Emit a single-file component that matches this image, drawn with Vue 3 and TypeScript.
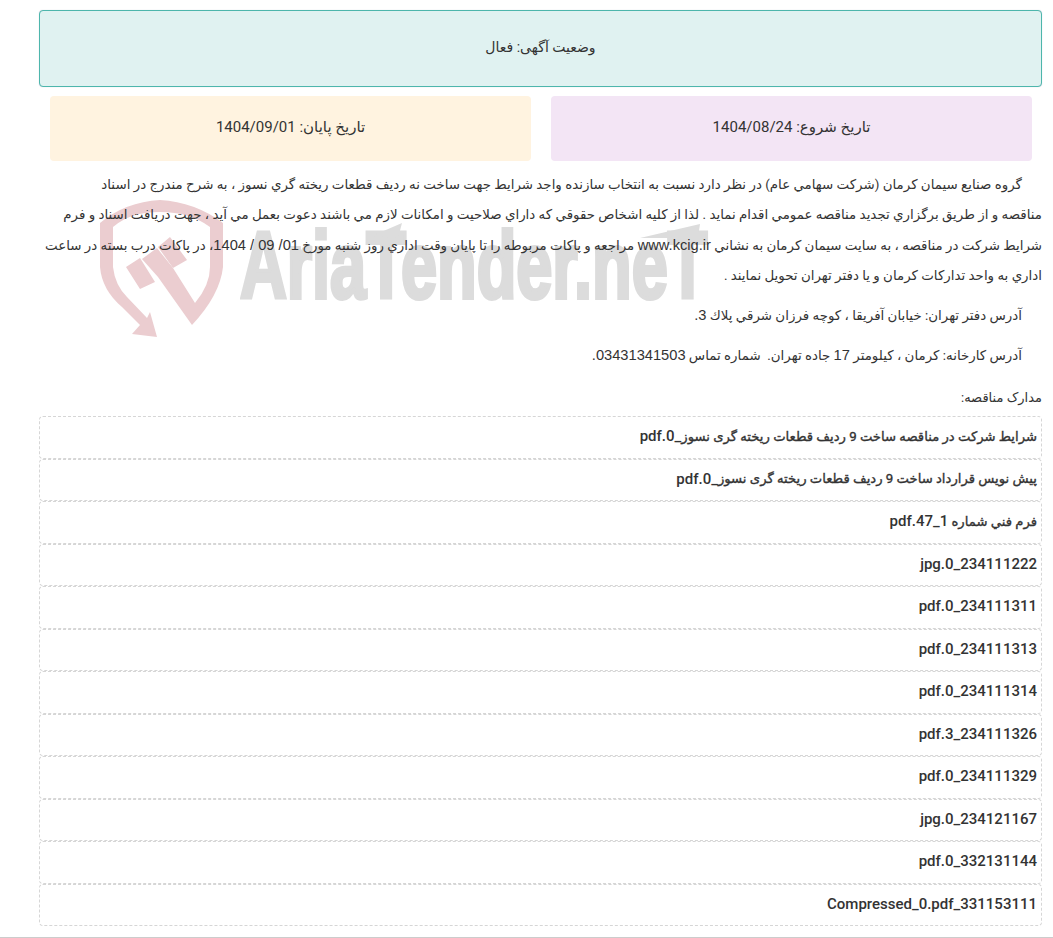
<template>
  <div class="page" dir="rtl">
    <div class="status"><span class="status__text">وضعیت آگهی: فعال</span></div>
    <div class="dates">
      <div class="date date--start"><span class="date__text">تاریخ شروع: 1404/08/24</span></div>
      <div class="date date--end"><span class="date__text">تاریخ پایان: 1404/09/01</span></div>
    </div>

    <div class="body">
      <svg class="mark" viewBox="0 0 160 150" aria-hidden="true">
        <path d="M10 33 Q35 12 70 10 Q105 12 133 33 L133 77 Q130 105 102 135 L68 87 L52 69 L67 58 L83 78 L105 113 Q120 95 120 77 L120 37 Q100 22 70 22 Q40 22 23 37 L23 77 Q25 95 37 107 L57 128 L60 122 L67 147 L42 144 L50 135 L32 117 Q12 100 10 77 Z" />
        <path d="M36 77 L50 68 L65 92 L50 99 Z M68 57 L80 47 L97 70 L83 78 Z" />
      </svg>
      <div class="wordmark" dir="ltr">AriaTender.neT</div>
      <svg class="wordmark-bars" viewBox="0 0 460 30" aria-hidden="true">
        <path d="M132 14 L162 1 L158 16 Z M400 16 L460 2 L458 16 Z" />
      </svg>

      <p class="lead">گروه صنايع سيمان كرمان (شركت سهامي عام) در نظر دارد نسبت به انتخاب سازنده واجد شرايط جهت ساخت نه رديف قطعات ريخته گري نسوز ، به شرح مندرج در اسناد<br />مناقصه و از طريق برگزاري تجديد مناقصه عمومي اقدام نمايد . لذا از كليه اشخاص حقوقي كه داراي صلاحيت و امكانات لازم مي باشند دعوت بعمل مي آيد ، جهت دريافت اسناد و فرم<br />شرايط شركت در مناقصه ، به سايت سيمان كرمان به نشاني <span class="latin">www.kcig.ir</span> مراجعه و پاكات مربوطه را تا پايان وقت اداري روز شنبه مورخ <span class="latin">01/ 09 / 1404</span>، در پاكات درب بسته در ساعت<br />اداري به واحد تداركات كرمان و يا دفتر تهران تحويل نمايند .</p>
      <p class="address">آدرس دفتر تهران: خيابان آفريقا ، كوچه فرزان شرقي پلاك <span class="latin">3.</span></p>
      <p class="address">آدرس كارخانه: كرمان ، كيلومتر <span class="latin">17</span> جاده تهران.&nbsp; شماره تماس <span class="latin">03431341503.</span></p>
    </div>

    <div class="docs-title">مدارک مناقصه:</div>
    <div class="docs">
      <div v-for="file in files" :key="file.name" class="doc"><span class="doc__fa">{{ file.fa }}</span>{{ file.name }}</div>
    </div>
  </div>
</template>

<script setup lang="ts">
interface DocFile {
  fa?: string;
  name: string;
}

const files: DocFile[] = [
  { fa: "شرايط شرکت در مناقصه ساخت 9 رديف قطعات ريخته گری نسوز", name: "_0.pdf" },
  { fa: "پیش نویس قرارداد ساخت 9 رديف قطعات ريخته گری نسوز", name: "_0.pdf " },
  { fa: "فرم فني شماره ", name: "1_47.pdf" },
  { name: "234111222_0.jpg" },
  { name: "234111311_0.pdf" },
  { name: "234111313_0.pdf" },
  { name: "234111314_0.pdf" },
  { name: "234111326_3.pdf" },
  { name: "234111329_0.pdf" },
  { name: "234121167_0.jpg" },
  { name: "332131144_0.pdf" },
  { name: "331153111_Compressed_0.pdf" },
];
</script>

<style>
html,
body {
  margin: 0;
  background: #fff;
}
</style>

<style scoped>
.page {
  box-sizing: border-box;
  height: 938px;
  padding: 10px 11px 0 39px;
  overflow: hidden;
  border-bottom: 1px solid #ccc;
  font-family: Roboto, "DejaVu Sans", sans-serif;
  font-size: 14px;
  color: #333;
}
.status {
  box-sizing: border-box;
  height: 77px;
  display: flex;
  align-items: center;
  justify-content: center;
  background: #e0f2f1;
  border: 1px solid #4db6ac;
  border-radius: 4px;
  box-shadow: 0 0 1px rgba(60, 70, 130, 0.3);
}
.status__text {
  margin-bottom: 4px;
}
.dates {
  display: grid;
  grid-template-columns: 1fr 1fr;
  gap: 20px;
  margin: 9px 10px 0 11px;
}
.date {
  height: 65px;
  display: flex;
  align-items: center;
  justify-content: center;
  border-radius: 4px;
  font-size: 15px;
}
.date__text {
  margin-bottom: 4px;
}
.date--start {
  background: #f3e5f5;
}
.date--end {
  background: #fff3e0;
}
.body {
  position: relative;
  padding-top: 9px;
  font-size: 13.4px;
}
.latin {
  font-family: "Liberation Sans", sans-serif;
  font-size: 14.67px;
}
.lead {
  position: relative;
  margin: 0;
  line-height: 30px;
  text-indent: 20px;
  white-space: nowrap;
}
.address {
  position: relative;
  margin: 9px 0 0;
  padding-right: 20px;
  line-height: 30px;
}
.mark {
  position: absolute;
  left: 51px;
  top: 29px;
  width: 160px;
  height: 150px;
  fill: #ebcdd0;
}
.wordmark {
  position: absolute;
  left: 201px;
  top: 55px;
  font-family: "Liberation Sans", sans-serif;
  font-size: 94px;
  font-weight: 700;
  line-height: 100px;
  color: #dcdcdc;
  -webkit-text-stroke: 4px #dcdcdc;
  transform: scaleX(0.69);
  transform-origin: left top;
  white-space: nowrap;
}
.wordmark-bars {
  position: absolute;
  left: 201px;
  top: 61px;
  width: 460px;
  height: 30px;
  fill: #dcdcdc;
}
.docs-title {
  margin-top: 17px;
  line-height: 20px;
  font-size: 13px;
}
.docs {
  margin-top: 8px;
  display: flex;
  flex-direction: column;
}
.doc {
  box-sizing: border-box;
  height: 42.5px;
  display: flex;
  align-items: center;
  white-space: pre;
  padding: 0 4px 2px;
  border: 1px dashed #d6d6d6;
  border-radius: 4px;
  font-size: 15px;
  font-weight: 500;
}
.doc__fa {
  font-size: 13.2px;
  font-weight: 400;
  -webkit-text-stroke: 0.35px currentColor;
}
</style>
